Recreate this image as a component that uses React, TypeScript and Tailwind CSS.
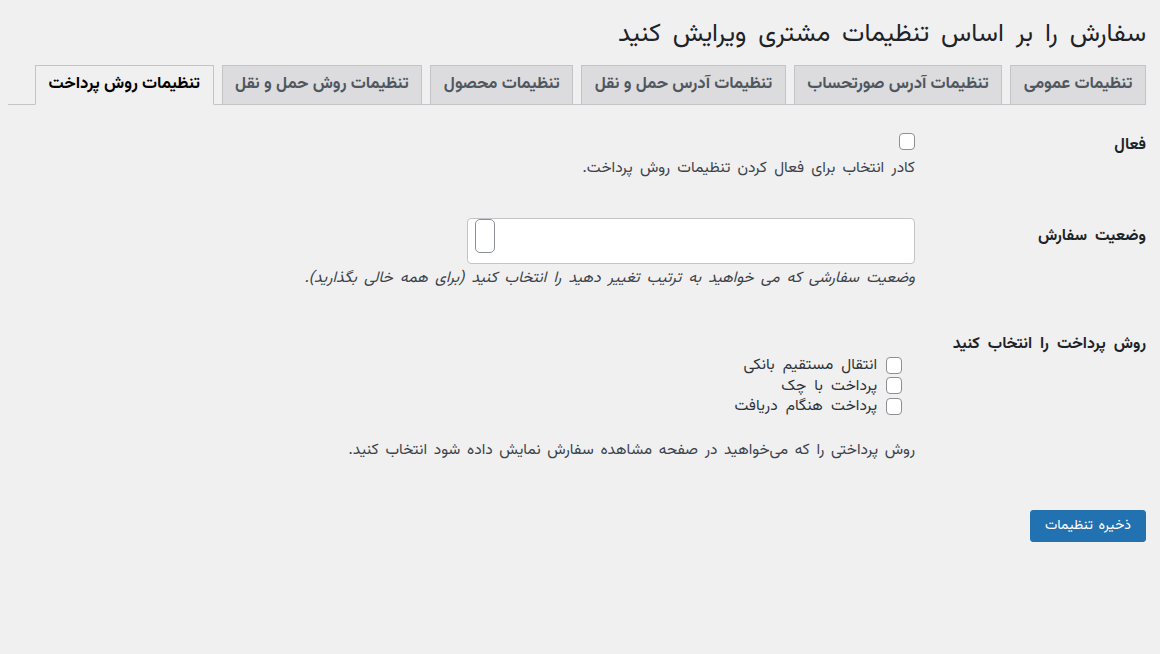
import React from 'react';

const FONT = { fontFamily: '"Vazirmatn", "Noto Sans Arabic", "Noto Naskh Arabic", "DejaVu Sans", sans-serif' };

const tabs = [
  'تنظیمات عمومی',
  'تنظیمات آدرس صورتحساب',
  'تنظیمات آدرس حمل و نقل',
  'تنظیمات محصول',
  'تنظیمات روش حمل و نقل',
  'تنظیمات روش پرداخت',
];

const methods = ['انتقال مستقیم بانکی', 'پرداخت با چک', 'پرداخت هنگام دریافت'];

const Checkbox: React.FC = () => (
  <span className="block w-[16px] h-[17px] shrink-0 rounded-[4px] border border-[#8c8f94] bg-white" />
);

const Row: React.FC<{ label: string; children: React.ReactNode; className?: string; labelPad?: string }> = ({
  label,
  children,
  className,
  labelPad,
}) => (
  <div className={`flex ${className ?? ''}`}>
    <div className={`w-[231px] shrink-0 text-[16px] leading-[22px] font-bold text-[#1d2327] [word-spacing:4px] ${labelPad ?? ''}`}>
      {label}
    </div>
    <div className="flex-1">{children}</div>
  </div>
);

export default function App() {
  const active = tabs.length - 1;
  return (
    <div
      dir="rtl"
      style={FONT}
      className="min-h-[654px] bg-[#f0f0f1] pr-[14px] pl-[8px] pt-[20px] text-[15.5px] text-[#3c434a] [word-spacing:3px]"
    >
      <h1 className="h-[30px] text-[25.5px] leading-[30px] font-normal text-[#1d2327] [word-spacing:5px]">
        سفارش را بر اساس تنظیمات مشتری ویرایش کنید
      </h1>

      {/* tabs */}
      <nav className="mt-[15px] flex gap-[8px] border-b border-[#c3c4c7]">
        {tabs.map((t, i) => (
          <span
            key={t}
            className={`-mb-px flex h-[40px] items-center whitespace-nowrap border px-[12.5px] text-[16.8px] font-bold [word-spacing:0px] ${
              i === active
                ? 'border-[#c3c4c7] border-b-[#f0f0f1] bg-[#f0f0f1] text-[#000]'
                : 'border-[#c3c4c7] bg-[#dcdcde] text-[#50575e]'
            }`}
          >
            {t}
          </span>
        ))}
      </nav>

      <div className="pt-[28px]">
        <Row label="فعال" labelPad="pt-[2px]">
          <Checkbox />
          <p className="mt-[8px] leading-[20px]">کادر انتخاب برای فعال کردن تنظیمات روش پرداخت.</p>
        </Row>

        <Row label="وضعیت سفارش" className="mt-[40px]" labelPad="pt-[8px]">
          <div className="relative h-[46px] w-[448px] rounded-[4px] border border-[#c3c4c7] bg-white">
            <span className="absolute left-[7px] top-0 h-[34px] w-[20px] rounded-[5px] border border-[#8c8f94] bg-white" />
          </div>
          <p className="mt-[4px] leading-[20px] italic">
            وضعیت سفارشی که می خواهید به ترتیب تغییر دهید را انتخاب کنید (برای همه خالی بگذارید).
          </p>
        </Row>

        <Row label="روش پرداخت را انتخاب کنید" className="mt-[45px]" labelPad="pt-[1px]">
          <div className="flex flex-col pt-[22px] pr-[13px]">
            {methods.map((m) => (
              <label key={m} className="flex h-[20.5px] items-center gap-[9px] text-[15.5px] text-[#2c3338] [word-spacing:4px]">
                <Checkbox />
                <span className="leading-[18px]">{m}</span>
              </label>
            ))}
          </div>
          <p className="mt-[23.5px] leading-[20px] [word-spacing:2.5px]">
            روش پرداختی را که می‌خواهید در صفحه مشاهده سفارش نمایش داده شود انتخاب کنید.
          </p>
        </Row>

        <div className="mt-[50px] flex">
          <button className="h-[32px] rounded-[3px] border border-[#2271b1] bg-[#2271b1] px-[14px] text-[14px] leading-[30px] text-white [word-spacing:2px]">
            ذخیره تنظیمات
          </button>
        </div>
      </div>
    </div>
  );
}
